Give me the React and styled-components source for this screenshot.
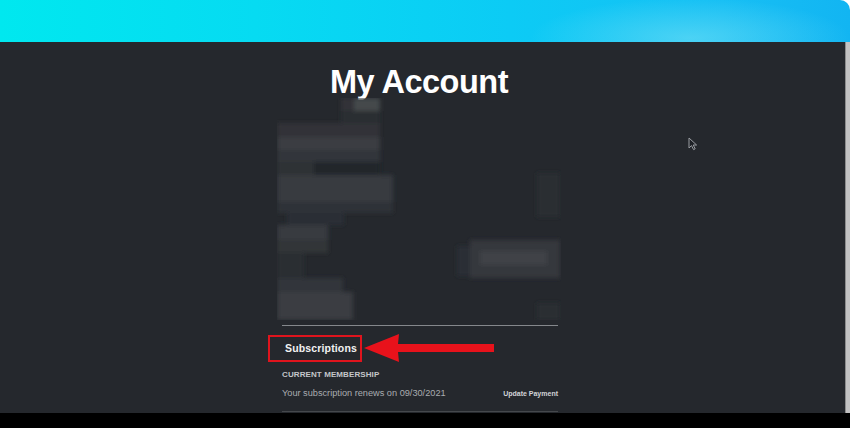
import React from 'react'
import styled, { createGlobalStyle } from 'styled-components'

const Global = createGlobalStyle`
  html, body { margin: 0; padding: 0; background: #ffffff; }
  body { font-family: "Liberation Sans", Arial, sans-serif; }
`

const mosaic = [
  { x: 64, y: 0, w: 13, h: 13, c: '#303338' },
  { x: 77, y: 0, w: 26, h: 13, c: '#45484c' },
  { x: 64, y: 13, w: 39, h: 12, c: '#2b2e33' },
  { x: 0, y: 25, w: 103, h: 14, c: '#303338' },
  { x: 0, y: 39, w: 103, h: 13, c: '#3a3d42' },
  { x: 0, y: 52, w: 103, h: 12, c: '#33363b' },
  { x: 0, y: 64, w: 37, h: 13, c: '#2e3136' },
  { x: 37, y: 64, w: 66, h: 13, c: '#24272c' },
  { x: 0, y: 77, w: 116, h: 27, c: '#373a3f' },
  { x: 0, y: 104, w: 116, h: 11, c: '#2f3237' },
  { x: 10, y: 115, w: 57, h: 12, c: '#2c2f34' },
  { x: 0, y: 127, w: 51, h: 15, c: '#383b40' },
  { x: 0, y: 142, w: 51, h: 13, c: '#313439' },
  { x: 0, y: 155, w: 27, h: 25, c: '#2b2e33' },
  { x: 0, y: 180, w: 66, h: 14, c: '#33363b' },
  { x: 0, y: 194, w: 76, h: 28, c: '#3a3d42' },
  { x: 180, y: 148, w: 13, h: 30, c: '#2c2f34' },
  { x: 193, y: 142, w: 90, h: 38, c: '#36393e' },
  { x: 203, y: 153, w: 67, h: 14, c: '#404347' },
  { x: 260, y: 75, w: 23, h: 44, c: '#2b2e33' },
  { x: 260, y: 205, w: 23, h: 17, c: '#2b2e33' },
]

export default function App() {
  return (
    <>
      <Global />
      <Screen>
        <Banner />
        <Body>
          <Main>
            <Panel>
              <Title>My Account</Title>
              <Redacted width="284" height="222" viewBox="0 0 284 222">
                <defs>
                  <filter id="soft" x="-5%" y="-5%" width="110%" height="110%">
                    <feGaussianBlur stdDeviation="2" />
                  </filter>
                </defs>
                <g filter="url(#soft)">
                  {mosaic.map((b, i) => (
                    <rect key={i} x={b.x} y={b.y} width={b.w} height={b.h} fill={b.c} />
                  ))}
                </g>
              </Redacted>
              <Section>
                <Divider $tone="#85888c" />
                <HeadingRow>
                  <Highlight>Subscriptions</Highlight>
                  <Arrow width="131" height="30" viewBox="0 0 131 30">
                    <path d="M0 15 L35 1 L34 11 L130 11 L130 19 L34 19 L35 29 Z" fill="#e8121b" />
                  </Arrow>
                </HeadingRow>
                <Label>Current Membership</Label>
                <InfoRow>
                  <Renewal>Your subscription renews on 09/30/2021</Renewal>
                  <TextLink>Update Payment</TextLink>
                </InfoRow>
                <Divider $tone="#45484c" />
              </Section>
            </Panel>
            <Cursor width="10" height="14" viewBox="0 0 10 14">
              <path d="M1 1 L1 11 L3.5 8.6 L5.6 12.6 L7.2 11.8 L5.2 8 L8.6 8 Z" fill="#1e2126" stroke="#9a9da2" strokeWidth="1" />
            </Cursor>
          </Main>
          <Scrollbar />
        </Body>
        <Footer />
      </Screen>
    </>
  )
}

const Screen = styled.div`
  width: 850px;
  height: 428px;
  display: flex;
  flex-direction: column;
  overflow: hidden;
`

const Banner = styled.div`
  height: 42px;
  flex-shrink: 0;
  border-top-right-radius: 10px;
  background:
    radial-gradient(ellipse 160px 40px at 690px 38px, rgba(120, 225, 245, 0.55), rgba(120, 225, 245, 0) 100%),
    linear-gradient(90deg, #00e8ef 0%, #06dbf2 30%, #0ccbf5 60%, #17bff4 85%, #12b5f2 100%);
`

const Body = styled.div`
  flex: 1;
  display: flex;
  background: #25282d;
`

const Main = styled.div`
  flex: 1;
  position: relative;
  padding: 24px 0 0 277px;
`

const Panel = styled.div`
  width: 284px;
  display: flex;
  flex-direction: column;
`

const Title = styled.h1`
  margin: 0;
  font-size: 32.5px;
  line-height: 33px;
  font-weight: 700;
  color: #ffffff;
  text-align: center;
  letter-spacing: -0.5px;
`

const Redacted = styled.svg`
  display: block;
  margin-top: -1px;
`

const Section = styled.div`
  margin: 5px 3px 0 5px;
  display: flex;
  flex-direction: column;
`

const Divider = styled.div`
  height: 1px;
  background: ${p => p.$tone};
`

const HeadingRow = styled.div`
  display: flex;
  align-items: center;
  margin: 7px 0 0 -14px;
`

const Highlight = styled.div`
  box-sizing: border-box;
  width: 94px;
  height: 27px;
  border: 2px solid #e0141d;
  padding-left: 15px;
  display: flex;
  align-items: center;
  font-size: 10.5px;
  font-weight: 700;
  letter-spacing: 0.15px;
  color: #f2f2f2;
`

const Arrow = styled.svg`
  display: block;
  margin-left: 2px;
`

const Label = styled.div`
  margin-top: 7px;
  font-size: 8px;
  line-height: 10px;
  font-weight: 700;
  letter-spacing: 0.1px;
  text-transform: uppercase;
  color: #c4c6ca;
`

const InfoRow = styled.div`
  display: flex;
  justify-content: space-between;
  align-items: baseline;
  margin: 7px 0 12px;
`

const Renewal = styled.span`
  font-size: 9.2px;
  line-height: 12px;
  color: #a9acb0;
`

const TextLink = styled.span`
  font-size: 7px;
  font-weight: 700;
  color: #d2d4d7;
`

const Cursor = styled.svg`
  position: absolute;
  left: 688px;
  top: 95px;
`

const Scrollbar = styled.div`
  width: 4px;
  background: #c2c2c2;
  border-left: 1px solid #8c8c8c;
`

const Footer = styled.div`
  height: 15px;
  flex-shrink: 0;
  background: #000000;
`
